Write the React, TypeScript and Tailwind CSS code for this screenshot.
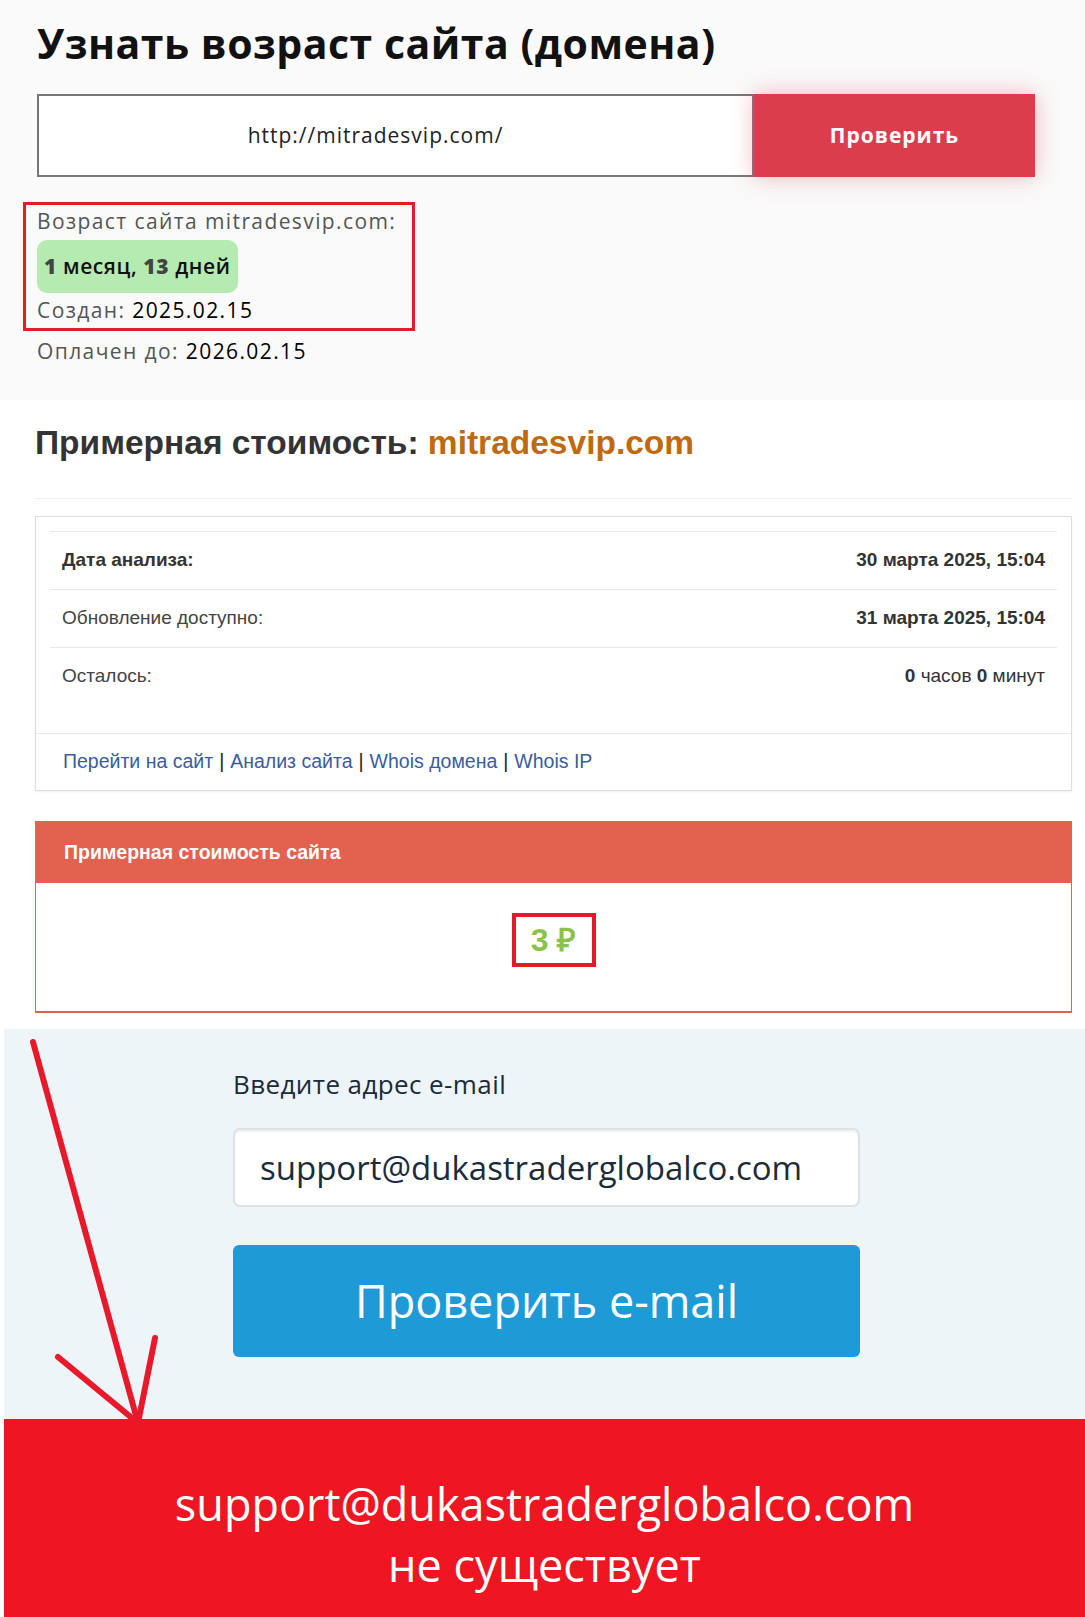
const sans = "font-['Open_Sans',sans-serif]";
const arial = "font-['Liberation_Sans',Arial,sans-serif]";

function AgeSection() {
  return (
    <section className={`${sans} h-[400px] bg-[#fafafa] pl-[37px] pt-[19px]`}>
      <h1 className="text-[41px] leading-[48px] font-bold text-[#111] tracking-[0.5px]">
        Узнать возраст сайта (домена)
      </h1>

      <div className="mt-[27px] flex h-[83px] w-[998px]">
        <div className="flex flex-1 items-center justify-center border-2 border-[#777] bg-white pr-[40px] text-[21px] tracking-[1px] text-[#222]">
          http://mitradesvip.com/
        </div>
        <button className="w-[281px] bg-[#dc3d4c] text-[21px] font-bold tracking-[1px] text-white shadow-[0_0_22px_rgba(220,61,76,0.35)]">
          Проверить
        </button>
      </div>

      <div className="-ml-[14px] mt-[25px] w-[392px] border-[3px] border-[#e21d2a] pb-[3px] pl-[11px] pt-[2px] text-[21px] leading-[29px] tracking-[1.4px] text-[#555]">
        <p>Возраст сайта mitradesvip.com:</p>
        <div className="mt-[4px] inline-flex h-[53px] items-center rounded-[10px] bg-[#b5ebb1] px-[7px] text-[21px] font-semibold tracking-[0.6px] text-[#111]">
          <b className="font-extrabold text-[#444]">1</b>&nbsp;месяц,&nbsp;
          <b className="font-extrabold text-[#444]">13</b>&nbsp;дней
        </div>
        <p className="mt-[3px]">
          Создан: <span className="text-black">2025.02.15</span>
        </p>
      </div>

      <p className="mt-[6px] text-[21px] leading-[29px] tracking-[1.4px] text-[#555]">
        Оплачен до: <span className="text-black">2026.02.15</span>
      </p>
    </section>
  );
}

const rows = [
  {
    label: "Дата анализа:",
    bold: true,
    value: <b>30 марта 2025, 15:04</b>,
  },
  {
    label: "Обновление доступно:",
    bold: false,
    value: <b>31 марта 2025, 15:04</b>,
  },
  {
    label: "Осталось:",
    bold: false,
    value: (
      <>
        <b>0</b> часов <b>0</b> минут
      </>
    ),
  },
];

function PriceSection() {
  return (
    <section className={`${arial} bg-white px-[35px] pt-[23px] pb-[16px]`}>
      <h2 className="text-[33.5px] leading-[40px] font-bold text-[#333]">
        Примерная стоимость:{" "}
        <span className="text-[#bf6a0f]">mitradesvip.com</span>
      </h2>

      <div className="mt-[35px] h-px w-[1037px] bg-[#eee]" />

      <div className="mt-[17px] w-[1037px] border border-[#ddd] shadow-[0_1px_2px_rgba(0,0,0,0.06)]">
        <div className="px-[14px] pt-[14px] pb-[28px]">
          {rows.map((row) => (
            <div
              key={row.label}
              className="flex h-[58px] items-center justify-between border-t border-[#e8e8e8] px-[12px] text-[19px] text-[#333]"
            >
              <span className={row.bold ? "font-bold" : "text-[#444]"}>
                {row.label}
              </span>
              <span>{row.value}</span>
            </div>
          ))}
        </div>

        <div className="flex h-[57px] items-center border-t border-[#e8e8e8] px-[27px] text-[19.5px] text-[#3a5d9c]">
          <span>Перейти на сайт</span>
          <span className="px-[6px] text-[#222]">|</span>
          <span>Анализ сайта</span>
          <span className="px-[6px] text-[#222]">|</span>
          <span>Whois домена</span>
          <span className="px-[6px] text-[#222]">|</span>
          <span>Whois IP</span>
        </div>
      </div>

      <div className="mt-[30px] w-[1037px] border border-[#e2614f] border-b-2">
        <div className="flex h-[61px] items-center bg-[#e2614f] px-[28px] text-[19.5px] font-bold text-white">
          Примерная стоимость сайта
        </div>
        <div className="flex h-[128px] justify-center bg-white pt-[30px]">
          <div className="flex h-[54px] w-[84px] items-center justify-center border-4 border-[#e21d2a] text-[32px] font-bold text-[#8bc34a]">
            3 ₽
          </div>
        </div>
      </div>
    </section>
  );
}

function EmailSection() {
  return (
    <section className={`${sans} ml-[4px] h-[390px] bg-[#eef5f9] pl-[229px] pt-[39px]`}>
      <p className="text-[26px] leading-[32px] font-medium tracking-[0.4px] text-[#1c2b39]">
        Введите адрес e-mail
      </p>
      <div className="mt-[28px] flex h-[79px] w-[627px] items-center rounded-[7px] border-2 border-[#dde2e5] bg-white pl-[25px] text-[33px] text-[#1c2b39] shadow-[inset_0_2px_2px_rgba(0,0,0,0.06)]">
        support@dukastraderglobalco.com
      </div>
      <button className="mt-[38px] h-[112px] w-[627px] rounded-[6px] bg-[#1e9bd7] text-[45px] text-white">
        Проверить e-mail
      </button>
    </section>
  );
}

function ResultSection() {
  return (
    <section className={`${sans} ml-[4px] flex h-[200px] flex-col items-center bg-[#ee1622] pt-[54px] text-[45px] leading-[61px] text-white`}>
      <p>support@dukastraderglobalco.com</p>
      <p>не существует</p>
    </section>
  );
}

export default function App() {
  return (
    <div className="relative w-[1085px] overflow-hidden bg-white">
      <AgeSection />
      <PriceSection />
      <EmailSection />
      <ResultSection />

      <svg
        className="pointer-events-none absolute left-0 top-0"
        width="1085"
        height="1617"
        fill="none"
        stroke="#e8192a"
        strokeWidth="6"
        strokeLinecap="round"
        strokeLinejoin="round"
      >
        <path d="M33 1042 L138 1423" />
        <path d="M58 1357 L138 1423 L155 1338" />
      </svg>
    </div>
  );
}
